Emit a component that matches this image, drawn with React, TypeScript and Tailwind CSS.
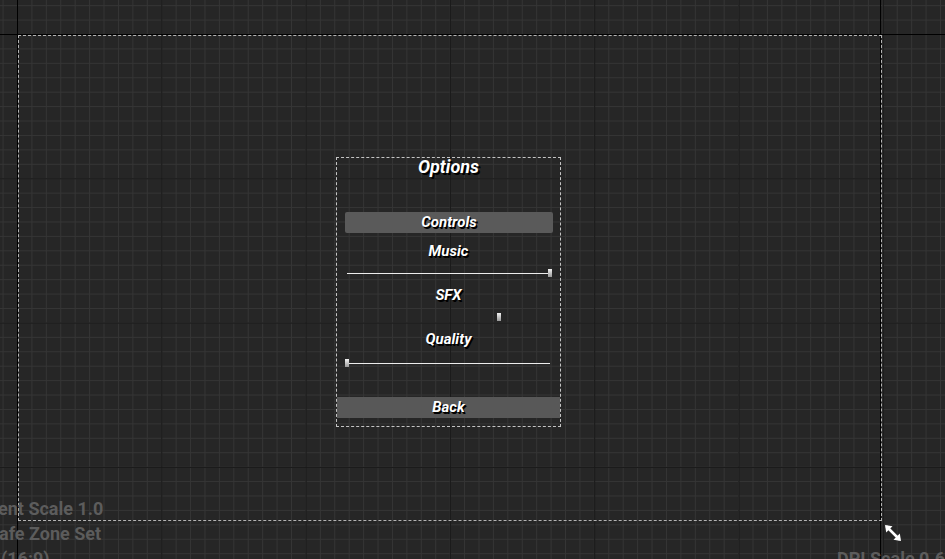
import React from "react";

// designer canvas grid: minor lines every 14.43px, major every 144.3px, origin at (17, 34)
const canvasBg =
  "[background-color:#262626] [background-image:linear-gradient(to_right,#181818_1px,transparent_1px),linear-gradient(to_bottom,#181818_1px,transparent_1px),linear-gradient(to_right,#353535_1px,transparent_1px),linear-gradient(to_bottom,#353535_1px,transparent_1px)] [background-size:144.3px_144.3px,144.3px_144.3px,14.43px_14.43px,14.43px_14.43px] [background-position:17px_34px]";

const label =
  "h-[22px] flex items-center justify-center text-white font-bold italic text-[15px] [text-shadow:1px_1px_0_#000,1.5px_1.5px_0_#000]";

function Slider({ value, track = true }: { value: number; track?: boolean }) {
  return (
    <div className="relative h-[22px] mx-[10px]">
      {track && <div className="absolute left-0 right-0 top-[11px] h-px bg-[#ececec]" />}
      <div
        className="absolute top-[7px] w-[4px] h-[8px] -ml-[2px] bg-gradient-to-b from-[#f2f2f2] to-[#9a9a9a]"
        style={{ left: `${value * 100}%` }}
      />
    </div>
  );
}

function ResizeIcon() {
  return (
    <svg width="20" height="20" viewBox="0 0 20 20" fill="none">
      <path d="M4 4 L16 16" stroke="#fff" strokeWidth="2.6" strokeLinecap="round" />
      <path d="M2 2 L9.5 3.2 L3.2 9.5 Z" fill="#fff" />
      <path d="M18 18 L10.5 16.8 L16.8 10.5 Z" fill="#fff" />
    </svg>
  );
}

export default function App() {
  return (
    <div
      className={`relative w-[945px] h-[559px] overflow-hidden ${canvasBg}`}
      style={{ fontFamily: "Roboto, 'Noto Sans', sans-serif" }}
    >
      {/* design surface outline lines */}
      <div className="absolute left-[17px] top-0 bottom-0 w-px bg-black" />
      <div className="absolute left-[880px] top-0 bottom-0 w-px bg-black" />
      <div className="absolute top-[34px] left-0 right-0 h-px bg-black" />

      {/* safe zone */}
      <div className="absolute left-[18px] top-[35px] w-[864px] h-[486px] border border-dashed border-[#b4b4b4]" />

      {/* options menu widget */}
      <div className="absolute left-[336px] top-[157px] w-[225px] h-[270px] border border-dashed border-[#c4c4c4] flex flex-col">
        <div className="-mt-[3px] h-[22px] flex items-center justify-center text-white font-bold italic text-[18px] [text-shadow:2px_2px_0_#000]">
          Options
        </div>
        <div className="mt-[35px] ml-[8px] mr-[7px] h-[21px] rounded-[2px] bg-[#5a5a5a] flex items-center justify-center text-white font-bold italic text-[15px] [text-shadow:1px_1px_0_#000,1.5px_1.5px_0_#000]">
          Controls
        </div>
        <div className={`mt-[7px] ${label}`}>Music</div>
        <Slider value={1} />
        <div className={label}>SFX</div>
        <Slider value={0.75} track={false} />
        <div className={label}>Quality</div>
        <div className="h-[2px]" />
        <Slider value={0} />
        <div className="mt-[23px] h-[21px] bg-[#585858] flex items-center justify-center text-white font-bold italic text-[15px] [text-shadow:1px_1px_0_#000,1.5px_1.5px_0_#000]">
          Back
        </div>
      </div>

      {/* viewport info */}
      <div className="absolute left-0 top-[496px] flex flex-col text-[18px] font-bold leading-[25px] text-[#5c5c5c] whitespace-nowrap">
        <div className="-ml-[2px]">ent Scale 1.0</div>
        <div className="-ml-[1px]">afe Zone Set</div>
        <div className="ml-[1px]">(16:9)</div>
      </div>
      <div className="absolute left-[837px] top-[546px] text-[18px] font-bold leading-[25px] text-[#5c5c5c] whitespace-nowrap">
        DPI Scale 0.67
      </div>

      <div className="absolute left-[883px] top-[523px]">
        <ResizeIcon />
      </div>
    </div>
  );
}
